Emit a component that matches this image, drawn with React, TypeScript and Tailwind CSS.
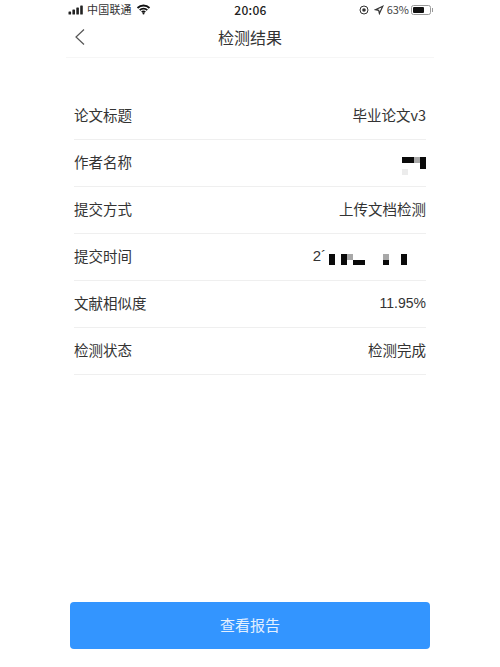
import React from 'react';

const rows = [
  { label: '论文标题', value: '毕业论文v3' },
  { label: '作者名称', value: 'author' },
  { label: '提交方式', value: '上传文档检测' },
  { label: '提交时间', value: 'time' },
  { label: '文献相似度', value: '11.95%' },
  { label: '检测状态', value: '检测完成' },
];

// k = black, g = grey, f = faint, . = empty
const cellClass: Record<string, string> = {
  k: 'bg-[#0a0a0a]',
  g: 'bg-[#a8a8a8]',
  f: 'bg-[#ececec]',
  '.': '',
};

const Mosaic: React.FC<{ cells: string[] }> = ({ cells }) => (
  <div className="flex flex-col">
    {cells.map((line, y) => (
      <div key={y} className="flex">
        {line.split('').map((c, x) => (
          <div key={x} className={`h-[5.7px] w-[6px] ${cellClass[c]}`} />
        ))}
      </div>
    ))}
  </div>
);

const StatusBar = () => (
  <div className="flex h-[19px] items-center justify-between pl-[68px] pr-[67px] text-[11px] text-[#333]">
    <div className="flex w-[150px] items-center">
      <svg width="16" height="10" viewBox="0 0 16 10" className="mr-[3px]">
        <rect x="0.5" y="6.5" width="2.6" height="3" rx="0.6" fill="#222" />
        <rect x="4.4" y="4.5" width="2.6" height="5" rx="0.6" fill="#222" />
        <rect x="8.3" y="2.5" width="2.6" height="7" rx="0.6" fill="#222" />
        <rect x="12.2" y="0.5" width="2.6" height="9" rx="0.6" fill="#222" />
      </svg>
      <span className="tracking-[0.2px]">中国联通</span>
      <svg width="15" height="11" viewBox="0 0 14 11" className="ml-[4px]" fill="none" stroke="#111" strokeWidth="1.8">
        <path d="M1 4a8.5 8.5 0 0 1 12 0" />
        <path d="M3.2 6.2a5.4 5.4 0 0 1 7.6 0" />
        <path d="M5.3 8.2a2.4 2.4 0 0 1 3.4 0" />
        <circle cx="7" cy="9.6" r="1" fill="#111" stroke="none" />
      </svg>
    </div>
    <span className="text-[12px] font-medium tracking-[0.3px] text-[#222]">20:06</span>
    <div className="flex w-[150px] items-center justify-end">
      <svg width="10" height="10" viewBox="0 0 10 10" className="mr-[5px]" fill="none" stroke="#333" strokeWidth="1">
        <circle cx="5" cy="5" r="4" />
        <circle cx="5" cy="5" r="1.8" fill="#333" stroke="none" />
      </svg>
      <svg width="10" height="10" viewBox="0 0 10 10" className="mr-[3px]" fill="none" stroke="#333" strokeWidth="1.2">
        <path d="M8.8 1.2 1.5 4.6l3.2.7.7 3.2z" />
      </svg>
      <span className="mr-[2px] text-[#444]">63%</span>
      <div className="flex h-[10px] w-[20px] items-center rounded-[2.5px] border border-[#999] p-[1px]">
        <div className="h-full w-[11px] rounded-[1px] bg-[#111]" />
      </div>
      <div className="ml-[1px] h-[4px] w-[1px] bg-[#999]" />
    </div>
  </div>
);

export default function App() {
  return (
    <div className="flex h-[667px] w-[500px] flex-col overflow-hidden bg-white font-['Noto_Sans_CJK_SC','Liberation_Sans',sans-serif]">
      <StatusBar />
      <div className="mx-[66px] grid h-[39px] grid-cols-[1fr_auto_1fr] items-center border-b border-[#f6f6f6] pb-[2px]">
        <svg width="12" height="18" viewBox="0 0 12 18" fill="none" stroke="#555" strokeWidth="1.2" className="ml-[8px]">
          <path d="M10 1.5 2 9l8 7.5" />
        </svg>
        <span className="text-[16px] text-[#333]">检测结果</span>
        <div />
      </div>
      <div className="mx-[74px] mt-[35px] flex flex-col">
        {rows.map((row) => (
          <div key={row.label} className="flex h-[47px] items-center justify-between border-b border-[#efefef] pb-[2px] text-[14.5px] text-[#333]">
            <span>{row.label}</span>
            {row.value === 'author' ? (
              <div className="mt-[8px]">
                <Mosaic cells={['kkgk', '...k', 'f...']} />
              </div>
            ) : row.value === 'time' ? (
              <div className="mr-[19px] flex items-center">
                <span className="mr-[3px] font-['Liberation_Sans',sans-serif] text-[15px] leading-[16px]">2´</span>
                <div className="mt-[7px]">
                  <Mosaic cells={['k.kg.....g..k', 'k.k.kk...k..k']} />
                </div>
              </div>
            ) : row.value === '11.95%' ? (
              <span className="font-['Liberation_Sans',sans-serif] text-[14px]">{row.value}</span>
            ) : (
              <span>{row.value}</span>
            )}
          </div>
        ))}
      </div>
      <div className="mx-[70px] mt-auto mb-[18px] flex h-[47px] items-center justify-center rounded-[4px] bg-[#3395ff] text-[15px] text-[#e3f0ff]">
        查看报告
      </div>
    </div>
  );
}
